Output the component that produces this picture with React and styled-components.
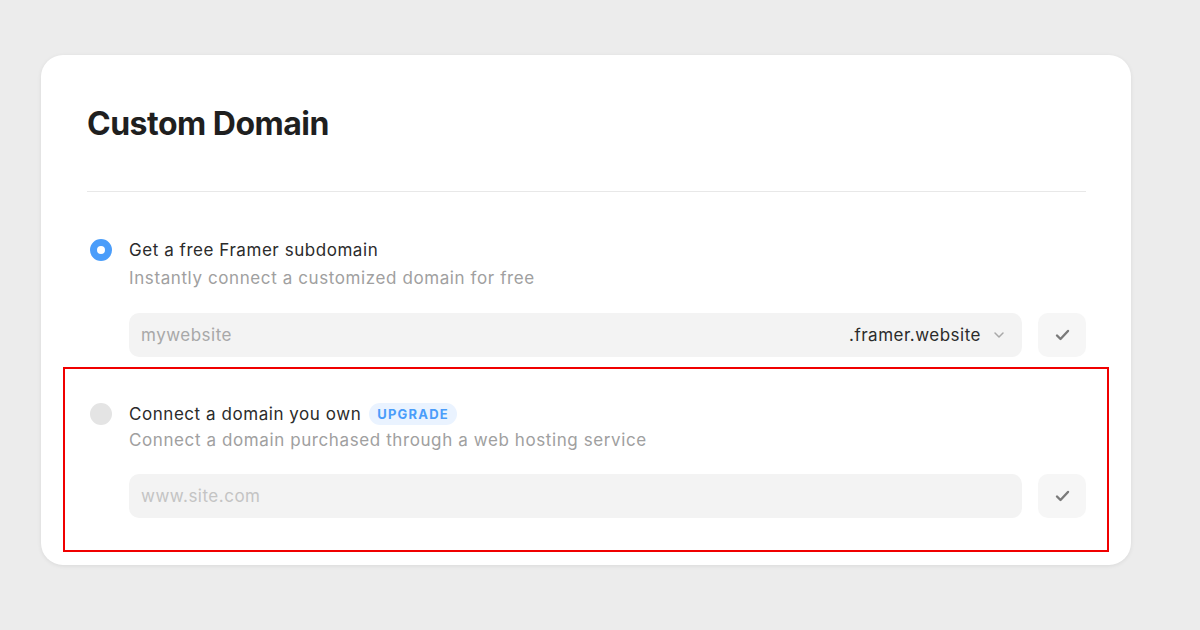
import React from 'react'
import styled, { createGlobalStyle } from 'styled-components'

const GlobalStyle = createGlobalStyle`
  html, body {
    margin: 0;
    padding: 0;
    background: #ececec;
    font-family: Inter, "Noto Sans", sans-serif;
  }
`;

const Page = styled.div`
  width: 1200px;
  height: 630px;
  padding: 55px 0 0 41px;
  box-sizing: border-box;
`;

const Card = styled.div`
  position: relative;
  width: 1090px;
  box-sizing: border-box;
  background: #ffffff;
  border-radius: 22px;
  padding: 50px 45px 47px 46px;
  box-shadow: 0 1px 4px rgba(0, 0, 0, 0.08);
`;

const Title = styled.h1`
  margin: 0;
  font-size: 32px;
  line-height: 38px;
  font-weight: 700;
  letter-spacing: -0.5px;
  color: #1f1f1f;
`;

const Divider = styled.div`
  height: 1px;
  background: #e8e8e8;
  margin-top: 48px;
`;

const Option = styled.div`
  display: grid;
  grid-template-columns: 42px 1fr;
  padding-top: ${p => p.$top}px;
`;

const Radio = styled.div`
  width: 22px;
  height: 22px;
  margin: 1px 0 0 3px;
  border-radius: 50%;
  box-sizing: border-box;
  background: ${p => (p.$checked ? '#ffffff' : '#e4e4e4')};
  border: ${p => (p.$checked ? '7px solid #4a9dfa' : 'none')};
`;

const Body = styled.div`
  display: flex;
  flex-direction: column;
`;

const Label = styled.div`
  display: flex;
  align-items: center;
  gap: 8px;
  font-size: 17px;
  line-height: 24px;
  font-weight: 400;
  letter-spacing: 0.55px;
  color: #2b2b2b;
`;

const Badge = styled.span`
  display: inline-flex;
  align-items: center;
  height: 22px;
  padding: 0 8px;
  border-radius: 11px;
  background: #eaf3ff;
  color: #4a9dfa;
  font-size: 13px;
  font-weight: 700;
  letter-spacing: 1.2px;
`;

const Hint = styled.div`
  margin-top: ${p => p.$gap}px;
  font-size: 17px;
  line-height: 24px;
  letter-spacing: 0.6px;
  color: #a0a0a0;
`;

const InputRow = styled.div`
  display: flex;
  gap: 16px;
  margin-top: ${p => p.$gap}px;
`;

const Field = styled.div`
  flex: 1;
  height: 44px;
  border-radius: 10px;
  background: #f3f3f3;
  display: flex;
  align-items: center;
  padding: 0 17px 0 12px;
  font-size: 17px;
  letter-spacing: 0.5px;
  color: ${p => (p.$muted ? '#c4c4c4' : '#a8a8a8')};
`;

const Placeholder = styled.span`
  flex: 1;
`;

const Suffix = styled.span`
  display: flex;
  align-items: center;
  gap: 12px;
  color: #2b2b2b;
  font-weight: 400;
`;

const CheckButton = styled.div`
  width: 48px;
  height: 44px;
  border-radius: 10px;
  background: #f6f6f6;
  display: flex;
  align-items: center;
  justify-content: center;
`;

const Annotation = styled.div`
  position: absolute;
  left: 22px;
  top: 312px;
  width: 1046px;
  height: 185px;
  box-sizing: border-box;
  border: 2px solid #f00000;
  pointer-events: none;
`;

const Check = () => (
  <svg width="15" height="12" viewBox="0 0 15 12" fill="none">
    <path d="M2 6.5 L5.5 10 L13 2" stroke="#7a7a7a" strokeWidth="2.4" strokeLinecap="round" strokeLinejoin="round" />
  </svg>
)

const Chevron = () => (
  <svg width="12" height="8" viewBox="0 0 12 8" fill="none">
    <path d="M2 2 L6 6 L10 2" stroke="#a8a8a8" strokeWidth="1.5" strokeLinecap="round" strokeLinejoin="round" />
  </svg>
)

export default function App() {
  return (
    <Page>
      <GlobalStyle />
      <Card>
        <Title>Custom Domain</Title>
        <Divider />

        <Option $top={46}>
          <Radio $checked />
          <Body>
            <Label>Get a free Framer subdomain</Label>
            <Hint $gap={4}>Instantly connect a customized domain for free</Hint>
            <InputRow $gap={23}>
              <Field>
                <Placeholder>mywebsite</Placeholder>
                <Suffix>
                  .framer.website
                  <Chevron />
                </Suffix>
              </Field>
              <CheckButton><Check /></CheckButton>
            </InputRow>
          </Body>
        </Option>

        <Option $top={45}>
          <Radio />
          <Body>
            <Label>
              Connect a domain you own
              <Badge>UPGRADE</Badge>
            </Label>
            <Hint $gap={2}>Connect a domain purchased through a web hosting service</Hint>
            <InputRow $gap={22}>
              <Field $muted>
                <Placeholder>www.site.com</Placeholder>
              </Field>
              <CheckButton><Check /></CheckButton>
            </InputRow>
          </Body>
        </Option>

        <Annotation />
      </Card>
    </Page>
  )
}
